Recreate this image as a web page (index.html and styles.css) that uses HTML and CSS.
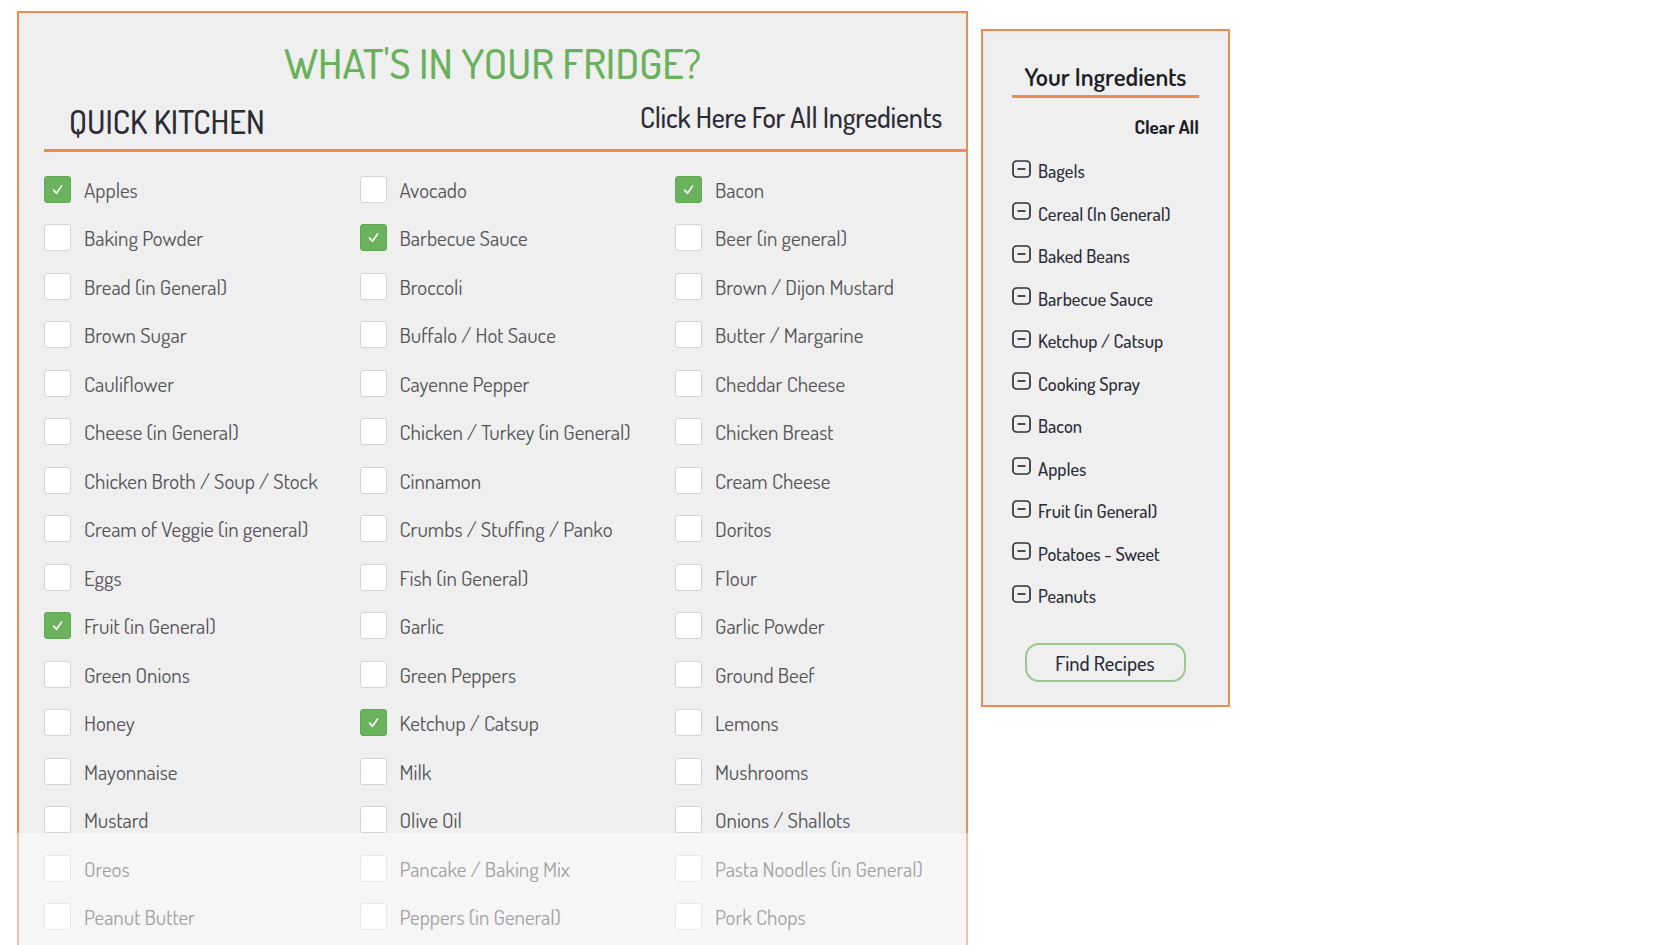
FILE: index.html
```html
<!DOCTYPE html>
<html lang="en">
<head>
<meta charset="utf-8">
<title>What's in your fridge?</title>
<link rel="stylesheet" href="styles.css">
</head>
<body>
<div class="page">
  <section class="fridge">
    <h1 class="title">WHAT'S IN YOUR FRIDGE?</h1>
    <div class="subhead">
      <h2 class="quick">QUICK KITCHEN</h2>
      <a class="all-link" href="#">Click Here For All Ingredients</a>
    </div>
    <ul class="grid">
      <li class="item"><span class="box on"><svg viewBox="0 0 27 27"><path d="M9.3 14.2 L12.4 17.6 L18 9.6"/></svg></span><span class="lbl">Apples</span></li>
      <li class="item"><span class="box"></span><span class="lbl">Avocado</span></li>
      <li class="item"><span class="box on"><svg viewBox="0 0 27 27"><path d="M9.3 14.2 L12.4 17.6 L18 9.6"/></svg></span><span class="lbl">Bacon</span></li>
      <li class="item"><span class="box"></span><span class="lbl">Baking Powder</span></li>
      <li class="item"><span class="box on"><svg viewBox="0 0 27 27"><path d="M9.3 14.2 L12.4 17.6 L18 9.6"/></svg></span><span class="lbl">Barbecue Sauce</span></li>
      <li class="item"><span class="box"></span><span class="lbl">Beer (in general)</span></li>
      <li class="item"><span class="box"></span><span class="lbl">Bread (in General)</span></li>
      <li class="item"><span class="box"></span><span class="lbl">Broccoli</span></li>
      <li class="item"><span class="box"></span><span class="lbl">Brown / Dijon Mustard</span></li>
      <li class="item"><span class="box"></span><span class="lbl">Brown Sugar</span></li>
      <li class="item"><span class="box"></span><span class="lbl">Buffalo / Hot Sauce</span></li>
      <li class="item"><span class="box"></span><span class="lbl">Butter / Margarine</span></li>
      <li class="item"><span class="box"></span><span class="lbl">Cauliflower</span></li>
      <li class="item"><span class="box"></span><span class="lbl">Cayenne Pepper</span></li>
      <li class="item"><span class="box"></span><span class="lbl">Cheddar Cheese</span></li>
      <li class="item"><span class="box"></span><span class="lbl">Cheese (in General)</span></li>
      <li class="item"><span class="box"></span><span class="lbl">Chicken / Turkey (in General)</span></li>
      <li class="item"><span class="box"></span><span class="lbl">Chicken Breast</span></li>
      <li class="item"><span class="box"></span><span class="lbl">Chicken Broth / Soup / Stock</span></li>
      <li class="item"><span class="box"></span><span class="lbl">Cinnamon</span></li>
      <li class="item"><span class="box"></span><span class="lbl">Cream Cheese</span></li>
      <li class="item"><span class="box"></span><span class="lbl">Cream of Veggie (in general)</span></li>
      <li class="item"><span class="box"></span><span class="lbl">Crumbs / Stuffing / Panko</span></li>
      <li class="item"><span class="box"></span><span class="lbl">Doritos</span></li>
      <li class="item"><span class="box"></span><span class="lbl">Eggs</span></li>
      <li class="item"><span class="box"></span><span class="lbl">Fish (in General)</span></li>
      <li class="item"><span class="box"></span><span class="lbl">Flour</span></li>
      <li class="item"><span class="box on"><svg viewBox="0 0 27 27"><path d="M9.3 14.2 L12.4 17.6 L18 9.6"/></svg></span><span class="lbl">Fruit (in General)</span></li>
      <li class="item"><span class="box"></span><span class="lbl">Garlic</span></li>
      <li class="item"><span class="box"></span><span class="lbl">Garlic Powder</span></li>
      <li class="item"><span class="box"></span><span class="lbl">Green Onions</span></li>
      <li class="item"><span class="box"></span><span class="lbl">Green Peppers</span></li>
      <li class="item"><span class="box"></span><span class="lbl">Ground Beef</span></li>
      <li class="item"><span class="box"></span><span class="lbl">Honey</span></li>
      <li class="item"><span class="box on"><svg viewBox="0 0 27 27"><path d="M9.3 14.2 L12.4 17.6 L18 9.6"/></svg></span><span class="lbl">Ketchup / Catsup</span></li>
      <li class="item"><span class="box"></span><span class="lbl">Lemons</span></li>
      <li class="item"><span class="box"></span><span class="lbl">Mayonnaise</span></li>
      <li class="item"><span class="box"></span><span class="lbl">Milk</span></li>
      <li class="item"><span class="box"></span><span class="lbl">Mushrooms</span></li>
      <li class="item"><span class="box"></span><span class="lbl">Mustard</span></li>
      <li class="item"><span class="box"></span><span class="lbl">Olive Oil</span></li>
      <li class="item"><span class="box"></span><span class="lbl">Onions / Shallots</span></li>
      <li class="item"><span class="box"></span><span class="lbl">Oreos</span></li>
      <li class="item"><span class="box"></span><span class="lbl">Pancake / Baking Mix</span></li>
      <li class="item"><span class="box"></span><span class="lbl">Pasta Noodles (in General)</span></li>
      <li class="item"><span class="box"></span><span class="lbl">Peanut Butter</span></li>
      <li class="item"><span class="box"></span><span class="lbl">Peppers (in General)</span></li>
      <li class="item"><span class="box"></span><span class="lbl">Pork Chops</span></li>
    </ul>
    <div class="fade"></div>
  </section>

  <aside class="basket">
    <div class="basket-head">
      <h3 class="basket-title">Your Ingredients</h3>
      <a class="clear" href="#">Clear All</a>
    </div>
    <ul class="chosen">
      <li><svg class="minus" viewBox="0 0 19 18"><rect x="1" y="1" width="17" height="16" rx="3.5"/><path d="M5.5 9 H13.5"/></svg><span>Bagels</span></li>
      <li><svg class="minus" viewBox="0 0 19 18"><rect x="1" y="1" width="17" height="16" rx="3.5"/><path d="M5.5 9 H13.5"/></svg><span>Cereal (In General)</span></li>
      <li><svg class="minus" viewBox="0 0 19 18"><rect x="1" y="1" width="17" height="16" rx="3.5"/><path d="M5.5 9 H13.5"/></svg><span>Baked Beans</span></li>
      <li><svg class="minus" viewBox="0 0 19 18"><rect x="1" y="1" width="17" height="16" rx="3.5"/><path d="M5.5 9 H13.5"/></svg><span>Barbecue Sauce</span></li>
      <li><svg class="minus" viewBox="0 0 19 18"><rect x="1" y="1" width="17" height="16" rx="3.5"/><path d="M5.5 9 H13.5"/></svg><span>Ketchup / Catsup</span></li>
      <li><svg class="minus" viewBox="0 0 19 18"><rect x="1" y="1" width="17" height="16" rx="3.5"/><path d="M5.5 9 H13.5"/></svg><span>Cooking Spray</span></li>
      <li><svg class="minus" viewBox="0 0 19 18"><rect x="1" y="1" width="17" height="16" rx="3.5"/><path d="M5.5 9 H13.5"/></svg><span>Bacon</span></li>
      <li><svg class="minus" viewBox="0 0 19 18"><rect x="1" y="1" width="17" height="16" rx="3.5"/><path d="M5.5 9 H13.5"/></svg><span>Apples</span></li>
      <li><svg class="minus" viewBox="0 0 19 18"><rect x="1" y="1" width="17" height="16" rx="3.5"/><path d="M5.5 9 H13.5"/></svg><span>Fruit (in General)</span></li>
      <li><svg class="minus" viewBox="0 0 19 18"><rect x="1" y="1" width="17" height="16" rx="3.5"/><path d="M5.5 9 H13.5"/></svg><span>Potatoes - Sweet</span></li>
      <li><svg class="minus" viewBox="0 0 19 18"><rect x="1" y="1" width="17" height="16" rx="3.5"/><path d="M5.5 9 H13.5"/></svg><span>Peanuts</span></li>
    </ul>
    <div class="find-wrap"><button class="find" type="button">Find Recipes</button></div>
  </aside>
</div>
</body>
</html>
```

FILE: styles.css
```css
html, body {
  margin: 0;
  padding: 0;
  background: #ffffff;
  overflow: hidden;
}

body {
  font-family: "Dosis", "Roboto Condensed", "DejaVu Sans Condensed", sans-serif;
  color: #2c2c36;
}

.page {
  display: flex;
  align-items: flex-start;
  padding: 11px 0 0 17px;
}

/* ---------- main card ---------- */
.fridge {
  position: relative;
  flex: none;
  width: 951px;
  box-sizing: border-box;
  border: 2px solid #ef8b50;
  background: #efefef;
  padding: 29px 0 0 22px;
}

.title {
  margin: 0 0 0 -22px;
  font-size: 42px;
  line-height: 42px;
  font-weight: 500;
  color: #6ab15b;
  text-align: center;
}

.subhead {
  display: flex;
  justify-content: space-between;
  align-items: flex-end;
  height: 65px;
  margin-left: 3px;
  padding: 0 24px 0 25px;
  border-bottom: 3px solid #ef8b50;
}

.quick {
  margin: 0 0 11px 0;
  font-size: 32.3px;
  line-height: 33px;
  font-weight: 500;
  color: #2c2c36;
}

.all-link {
  margin-bottom: 17px;
  font-size: 28px;
  line-height: 30px;
  font-weight: 500;
  letter-spacing: -0.2px;
  color: #2c2c36;
  text-decoration: none;
}

.grid {
  list-style: none;
  margin: 13px 0 0 0;
  padding: 0 0 60px 3px;
  display: grid;
  grid-template-columns: 315.5px 315.5px 295px;
  grid-auto-rows: 48.5px;
}

.item {
  display: flex;
  align-items: center;
  gap: 13px;
}

.box {
  width: 27px;
  height: 27px;
  box-sizing: border-box;
  border: 1px solid #d4d4d4;
  border-radius: 3px;
  background: #ffffff;
  flex: none;
  display: flex;
}

.box.on {
  background: #6ab35c;
  border-color: #62a854;
}

.box svg {
  width: 25px;
  height: 25px;
  fill: none;
  stroke: #ffffff;
  stroke-width: 1.8;
  stroke-linecap: round;
  stroke-linejoin: round;
}

.lbl {
  font-size: 21px;
  line-height: 21px;
  color: #555558;
  white-space: nowrap;
}

.fade {
  position: absolute;
  left: -2px;
  right: -2px;
  top: 820px;
  bottom: -2px;
  background: rgba(255, 255, 255, 0.45);
}

/* ---------- ingredients basket ---------- */
.basket {
  flex: none;
  margin: 18px 0 0 13px;
  width: 249px;
  box-sizing: border-box;
  border: 2px solid #ef8b50;
  background: #efefef;
  padding: 33px 0 23px 0;
}

.basket-head {
  margin: 0 29px;
  display: flex;
  flex-direction: column;
}

.basket-title {
  margin: 0;
  padding-bottom: 6px;
  border-bottom: 3px solid #ef8b50;
  font-size: 25px;
  line-height: 25px;
  font-weight: 600;
  text-align: center;
  color: #1f1f28;
}

.clear {
  align-self: flex-end;
  margin-top: 18.5px;
  font-size: 19px;
  line-height: 19.5px;
  font-weight: 700;
  color: #1f1f28;
  text-decoration: none;
}

.chosen {
  list-style: none;
  margin: 13.75px 0 0 0;
  padding: 0 0 0 29px;
}

.chosen li {
  display: flex;
  align-items: center;
  height: 42.5px;
  gap: 7px;
}

.minus {
  width: 19px;
  height: 18px;
  flex: none;
  margin-bottom: 5px;
  fill: none;
  stroke: #2f2f36;
  stroke-width: 1.7;
}

.chosen span {
  font-size: 18.5px;
  line-height: 18px;
  font-weight: 500;
  color: #2c2c36;
  white-space: nowrap;
}

.find-wrap {
  display: flex;
  justify-content: center;
  margin-top: 25.75px;
  padding-right: 1px;
}

.find {
  width: 161px;
  height: 39px;
  box-sizing: border-box;
  border: 2px solid #9cc78f;
  border-radius: 14px;
  background: #efefef;
  font-family: inherit;
  font-size: 20.5px;
  font-weight: 500;
  color: #2c2c36;
  padding: 0;
  cursor: pointer;
}
```
